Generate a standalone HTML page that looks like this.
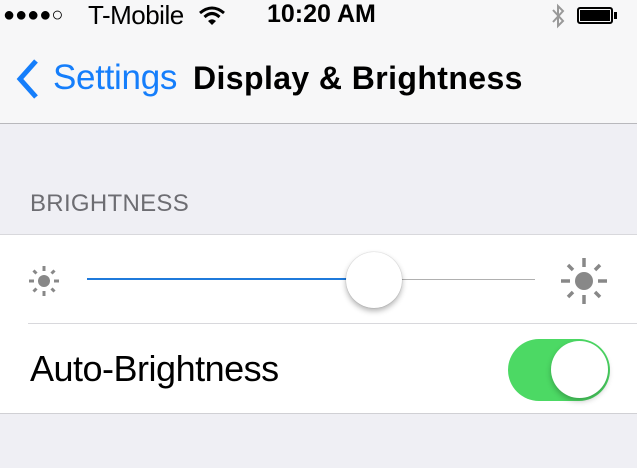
<!DOCTYPE html>
<html><head><style>
*{margin:0;padding:0;box-sizing:border-box}
body{width:637px;height:468px;background:#efeff4;font-family:"Liberation Sans",sans-serif;position:relative;overflow:hidden}
.nav{position:absolute;left:0;top:0;width:637px;height:124px;background:#f7f7f8;border-bottom:1px solid #b8b8bc}
.t{position:absolute;white-space:nowrap}
.grp{position:absolute;left:0;top:234px;width:637px;height:180px;background:#fff;border-top:1px solid #d8d8dc;border-bottom:1px solid #d0d0d4}
</style></head><body>
<div class="nav">
<div class="t" style="left:3px;top:1px;font-size:20px;color:#000;letter-spacing:0px;line-height:28px">●●●●○</div>
<div class="t" style="left:88px;top:0px;font-size:26px;color:#000;letter-spacing:-0.5px">T-Mobile</div>
<svg class="t" style="left:198px;top:5px" width="28" height="22" viewBox="0 0 28 22"><path d="M2 8 Q14 -2 26 8" stroke="#000" stroke-width="3" fill="none"/><path d="M6.5 12 Q14 5 21.5 12" stroke="#000" stroke-width="3" fill="none"/><path d="M10 16 L14 20 L18 16 Q14 12.5 10 16Z" fill="#000"/></svg>
<div class="t" style="left:267px;top:0px;font-size:25px;font-weight:bold;color:#000">10:20 AM</div>
<svg class="t" style="left:550px;top:3px" width="16" height="26" viewBox="0 0 16 26"><path d="M3 7 L13 18 L8 23 L8 3 L13 8 L3 19" stroke="#999" stroke-width="2" fill="none"/></svg>
<div class="t" style="left:577px;top:7px;width:36px;height:17px;border:2px solid #000;border-radius:3px;padding:1px"><div style="width:100%;height:100%;background:#000"></div></div>
<div class="t" style="left:614px;top:12px;width:3px;height:7px;background:#000"></div>
<svg class="t" style="left:14px;top:58px" width="28" height="42" viewBox="0 0 28 42"><path d="M22 3 L6 21 L22 39" stroke="#157efb" stroke-width="5" fill="none"/></svg>
<div class="t" style="left:53px;top:58px;font-size:35px;color:#157efb;letter-spacing:-0.3px">Settings</div>
<div class="t" style="left:193px;top:60px;font-size:32px;color:#000;font-weight:bold;letter-spacing:0.4px">Display &amp; Brightness</div>
</div>
<div class="t" style="left:30px;top:190px;font-size:24px;color:#6d6d72;letter-spacing:0.3px">BRIGHTNESS</div>
<div class="grp">
<svg class="t" style="left:26px;top:28px" width="36" height="36" viewBox="0 0 36 36"><circle cx="18" cy="18" r="6" fill="#888"/><g stroke="#888" stroke-width="3"><path d="M18 3v5M18 28v5M3 18h5M28 18h5M7.5 7.5l3 3M25.5 25.5l3 3M28.5 7.5l-3 3M10.5 25.5l-3 3"/></g></svg>
<div class="t" style="left:87px;top:43px;width:265px;height:2px;background:#1f7adb"></div>
<div class="t" style="left:352px;top:44px;width:183px;height:1px;background:#b0b0b0"></div>
<div class="t" style="left:346px;top:17px;width:56px;height:56px;border-radius:50%;background:#fff;box-shadow:0 3px 6px rgba(0,0,0,.3),0 0 1px rgba(0,0,0,.3)"></div>
<svg class="t" style="left:558px;top:20px" width="52" height="52" viewBox="0 0 52 52"><circle cx="26" cy="26" r="9" fill="#888"/><g stroke="#888" stroke-width="3.5"><path d="M26 3v9M26 40v9M3 26h9M40 26h9M10 10l5 5M37 37l5 5M42 10l-5 5M15 37l-5 5"/></g></svg>
<div class="t" style="left:28px;top:88px;width:609px;height:1px;background:#d8d8dc"></div>
<div class="t" style="left:30px;top:113px;font-size:36px;color:#000;letter-spacing:-0.5px">Auto-Brightness</div>
<div class="t" style="left:508px;top:104px;width:102px;height:62px;border-radius:31px;background:#4cd964"></div>
<div class="t" style="left:551px;top:106px;width:57px;height:57px;border-radius:50%;background:#fff;box-shadow:0 3px 6px rgba(0,0,0,.25)"></div>
</div>
</body></html>
